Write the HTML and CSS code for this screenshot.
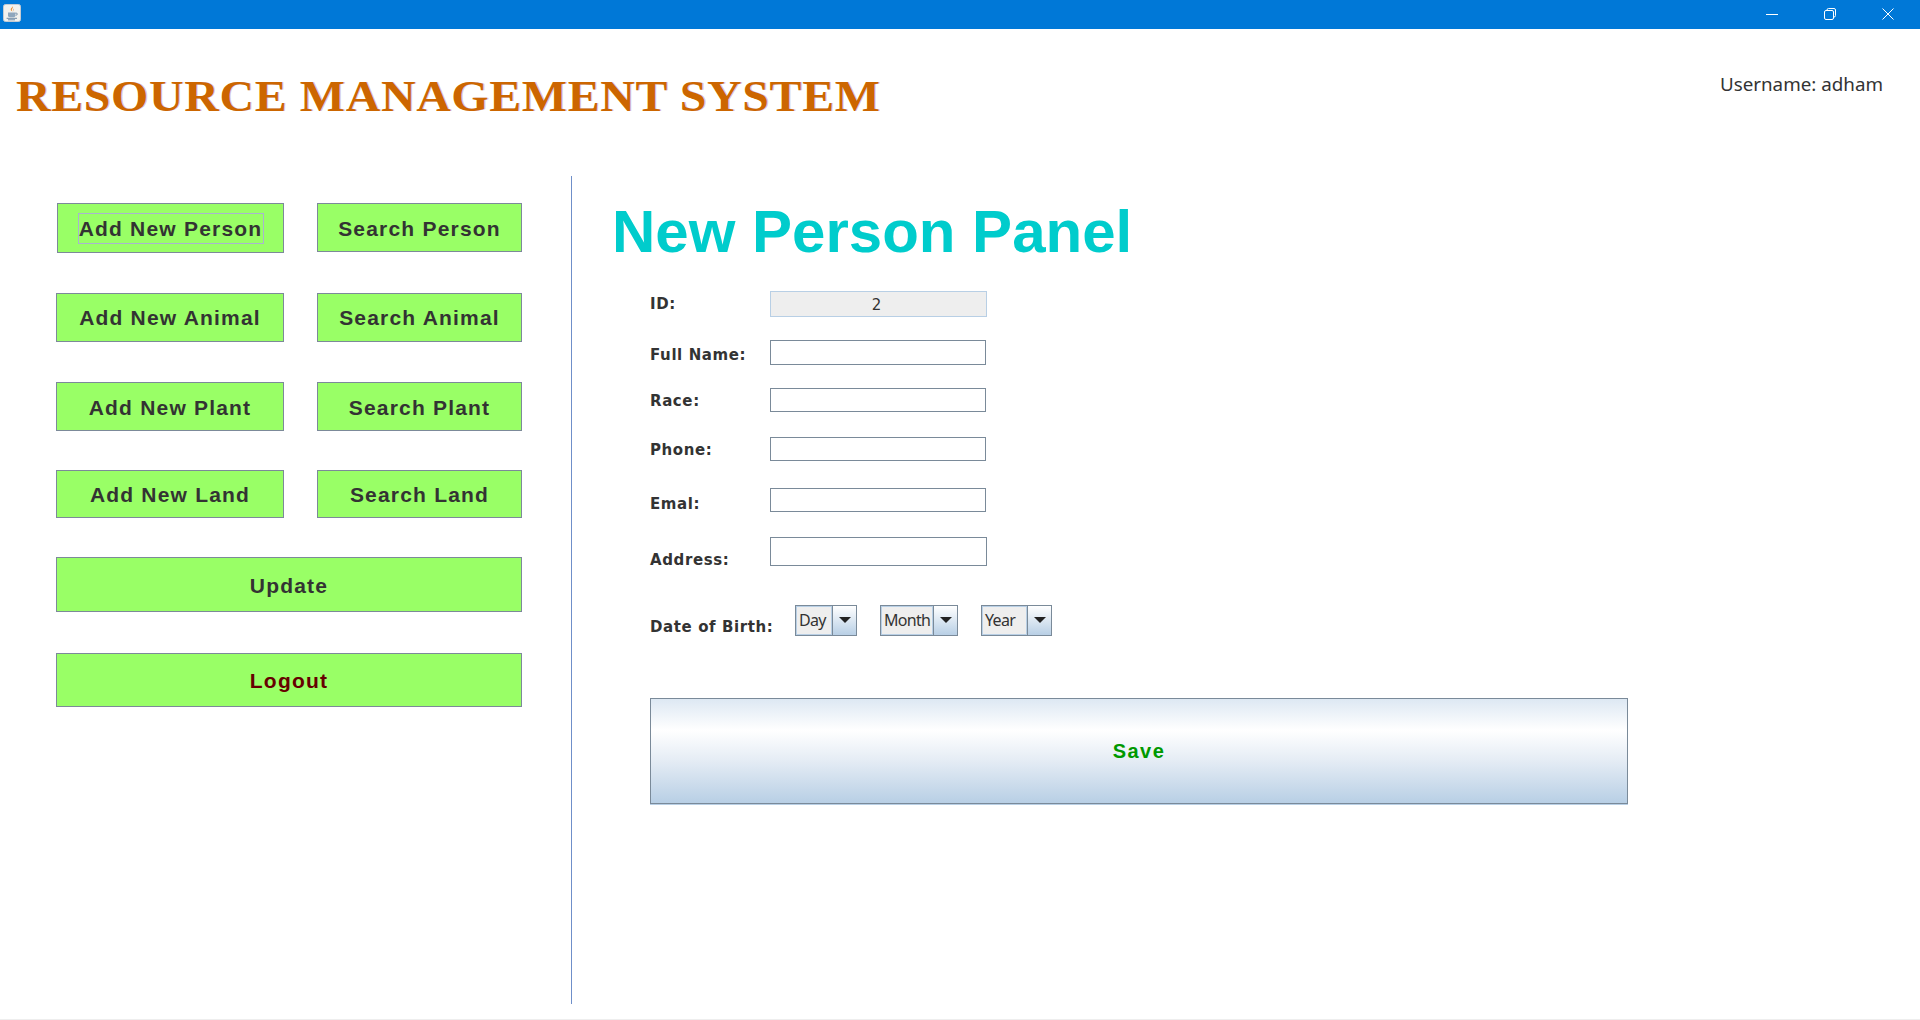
FILE: index.html
```html
<!DOCTYPE html>
<html lang="en">
<head>
<meta charset="utf-8">
<title>Resource Management System</title>
<link rel="stylesheet" href="styles.css">
</head>
<body>
<div class="window">
  <div class="titlebar">
    <div class="app-icon">
      <svg width="18" height="18" viewBox="0 0 18 18">
        <rect x="0.5" y="0.5" width="17" height="17" rx="2" fill="#f1f1ee" stroke="#c4cbd3"/>
        <path d="M9.6 2.2c1.2 1.6-1.4 2.6-.6 4.4.2.6.8 1 .8 1-1.8-.8-2.6-2-1.8-3.2.5-.8 1.5-1.2 1.6-2.2z" fill="#e98a2c"/>
        <path d="M11 4.400c.4 1-1 1.600-.5 3-.9-.9-.5-2.200.5-3z" fill="#e9a15c"/>
        <path d="M5 8.600h7.400v3c0 1-.8 1.600-1.700 1.600H6.800C5.800 13.200 5 12.600 5 11.600z" fill="#8ea6bd"/>
        <path d="M12.400 9.200h1.300c.8 0 .8 2-.9 2.200" fill="none" stroke="#6f8aa5"/>
        <path d="M3.600 14.300h10.400M5 15.800h7" stroke="#6f8aa5" fill="none"/>
      </svg>
    </div>
    <div class="window-controls">
      <svg class="control" width="12" height="12" viewBox="0 0 12 12"><path d="M0 6.500h12" stroke="#fff"/></svg>
      <svg class="control" width="12" height="12" viewBox="0 0 12 12"><rect x="0.500" y="2.500" width="9" height="9" rx="1.500" fill="none" stroke="#fff"/><path d="M3 2.500v-.5a1.500 1.500 0 0 1 1.500-1.500h5.500a1.500 1.500 0 0 1 1.500 1.500v5.500a1.500 1.500 0 0 1-1.500 1.500h-.5" fill="none" stroke="#fff"/></svg>
      <svg class="control" width="12" height="12" viewBox="0 0 12 12"><path d="M.5.500l11 11M11.500.500l-11 11" stroke="#fff"/></svg>
    </div>
  </div>

  <header class="app-header">
    <h1 class="app-title">RESOURCE MANAGEMENT SYSTEM</h1>
    <div class="username">Username: adham</div>
  </header>

  <main class="main">
    <nav class="sidebar">
      <button class="nav-btn btn-focused h49"><span class="focus-ring">Add New Person</span></button>
      <button class="nav-btn nudge h49">Search Person</button>
      <button class="nav-btn h49">Add New Animal</button>
      <button class="nav-btn h49">Search Animal</button>
      <button class="nav-btn nudge h49">Add New Plant</button>
      <button class="nav-btn nudge h49">Search Plant</button>
      <button class="nav-btn h48">Add New Land</button>
      <button class="nav-btn h48">Search Land</button>
      <button class="nav-btn nudge wide h55">Update</button>
      <button class="nav-btn wide h54 logout">Logout</button>
    </nav>

    <section class="panel">
      <h2 class="panel-title">New Person Panel</h2>
      <form class="form">
        <label class="label pad-4">ID:</label>
        <input class="field field-id" type="text" value="2" disabled>
        <label class="label pad-6">Full Name:</label>
        <input class="field field-25" type="text">
        <label class="label pad-4">Race:</label>
        <input class="field" type="text">
        <label class="label pad-4">Phone:</label>
        <input class="field" type="text">
        <label class="label pad-7">Emal:</label>
        <input class="field" type="text">
        <label class="label pad-14">Address:</label>
        <input class="field field-address" type="text">
        <label class="label pad-13 dob-label">Date of Birth:</label>
        <div class="dob">
          <div class="combo combo-day"><span class="combo-value">Day</span><span class="combo-arrow"></span></div>
          <div class="combo combo-month"><span class="combo-value">Month</span><span class="combo-arrow"></span></div>
          <div class="combo combo-year"><span class="combo-value">Year</span><span class="combo-arrow"></span></div>
        </div>
        <button class="save" type="button">Save</button>
      </form>
    </section>
  </main>
  <div class="bottom-edge"></div>
</div>
</body>
</html>
```

FILE: styles.css
```css
* { box-sizing: border-box; }
html, body { margin: 0; padding: 0; background: #fff; }
.window { width: 1920px; height: 1020px; overflow: hidden; display: flex; flex-direction: column; background: #fff; }

.titlebar { height: 29px; background: #0078d7; display: flex; align-items: flex-start; justify-content: space-between; flex: none; }
.app-icon { margin: 4px 0 0 3px; height: 18px; }
.app-icon svg { display: block; }
.window-controls { display: flex; gap: 46px; padding: 8px 26px 0 0; }
.control { display: block; }

.app-header { height: 147px; flex: none; display: flex; justify-content: space-between; align-items: flex-start; }
.app-title { margin: 40px 0 0 16px; font: bold 44px/56px "Liberation Serif", serif; color: #cc6600; letter-spacing: 0.6px; white-space: nowrap; text-shadow: 1px 0 0 rgba(170,140,200,.45); transform: scaleX(1.088); transform-origin: left center; }
.username { margin: 42px 37px 0 0; font: 18.800px/26px "Noto Sans", sans-serif; color: #333; }

.main { flex: 1; display: flex; min-height: 0; }
.sidebar { width: 571px; flex: none; padding: 27px 0 0 56px; display: grid; grid-template-columns: 228px 205px; column-gap: 33px; grid-template-rows: 90px 89px 88px 87px 96px 54px; align-content: start; align-items: start; }
.nav-btn { display: flex; align-items: center; justify-content: center; padding: 1px 0 0; background: #99ff66; border: 1px solid #7c8a99; font: bold 21px/24px "Liberation Sans", sans-serif; letter-spacing: 1.200px; color: #333; white-space: nowrap; }
.nudge { padding-top: 3px; }
.h49 { height: 49px; }
.h48 { height: 48px; }
.h55 { height: 55px; }
.h54 { height: 54px; }
.wide { grid-column: 1 / span 2; width: 466px; }
.logout { color: #660000; }
.btn-focused { margin-left: 1px; width: 227px; height: 50px; padding: 0; }
.focus-ring { display: block; width: 186px; height: 31px; line-height: 29px; border: 1px solid #a8b4cf; }

.panel { flex: none; width: 1100px; height: 828px; border-left: 1px solid #6f8fc9; padding: 0 0 0 40px; }
.panel-title { margin: 0; height: 115px; padding-top: 21px; font: bold 60px/70px "Liberation Sans", sans-serif; color: #00cccc; white-space: nowrap; }

.form { margin-left: 38px; display: grid; grid-template-columns: 120px 858px; grid-template-rows: 49px 48px 49px 51px 49px 68px 93px 106px; align-items: start; }
.label { font: bold 15px/18px "DejaVu Sans", sans-serif; letter-spacing: 0.600px; color: #333; white-space: nowrap; display: block; }
.pad-4 { padding-top: 4px; }
.pad-6 { padding-top: 6px; }
.pad-7 { padding-top: 7px; }
.pad-13 { padding-top: 13px; }
.pad-14 { padding-top: 14px; }

.field { display: block; width: 216px; height: 24px; padding: 0 4px; margin: 0; border: 1px solid #7a8a99; border-radius: 0; background: #fff; outline: none; }
.field-25 { height: 25px; }
.field-address { width: 217px; height: 29px; }
.field-id { width: 217px; height: 26px; background: #eeeeee; border-color: #b8cfe5; text-align: center; font: 15px/24px "DejaVu Sans", sans-serif; color: #333; padding: 2px 4px 0 0; }

.dob { display: flex; gap: 23px; margin-left: 25px; }
.combo { height: 31px; display: flex; border: 1px solid #7a8a99; background: #eee; }
.combo-day { width: 62px; }
.combo-month { width: 78px; }
.combo-year { width: 71px; }
.combo-value { flex: 1; min-width: 0; overflow: hidden; border: 1px solid #b8cfe5; font: 16px/26px "Noto Sans", sans-serif; letter-spacing: -0.700px; color: #333; padding-left: 2px; background: #eee; white-space: nowrap; }
.combo-arrow { width: 24px; flex: none; border-left: 1px solid #7a8a99; background: linear-gradient(#fff, #b8cfe5); position: relative; }
.combo-arrow::after { content: ""; position: absolute; left: 6px; top: 11px; border-style: solid; border-width: 6px 6px 0 6px; border-color: #222 transparent transparent transparent; }

.save { grid-column: 1 / span 2; width: 978px; height: 106px; padding: 0; border: 1px solid #7a8a99; box-shadow: 0 1px 0 #b8cfe5; background: linear-gradient(#dde8f3 0%, #ffffff 30%, #e6edf5 58%, #b8cfe5 100%); font: bold 20px/24px "Liberation Sans", sans-serif; letter-spacing: 1.500px; color: #009900; }

.bottom-edge { height: 1px; background: #eeeeee; flex: none; margin-top: auto; }
```
